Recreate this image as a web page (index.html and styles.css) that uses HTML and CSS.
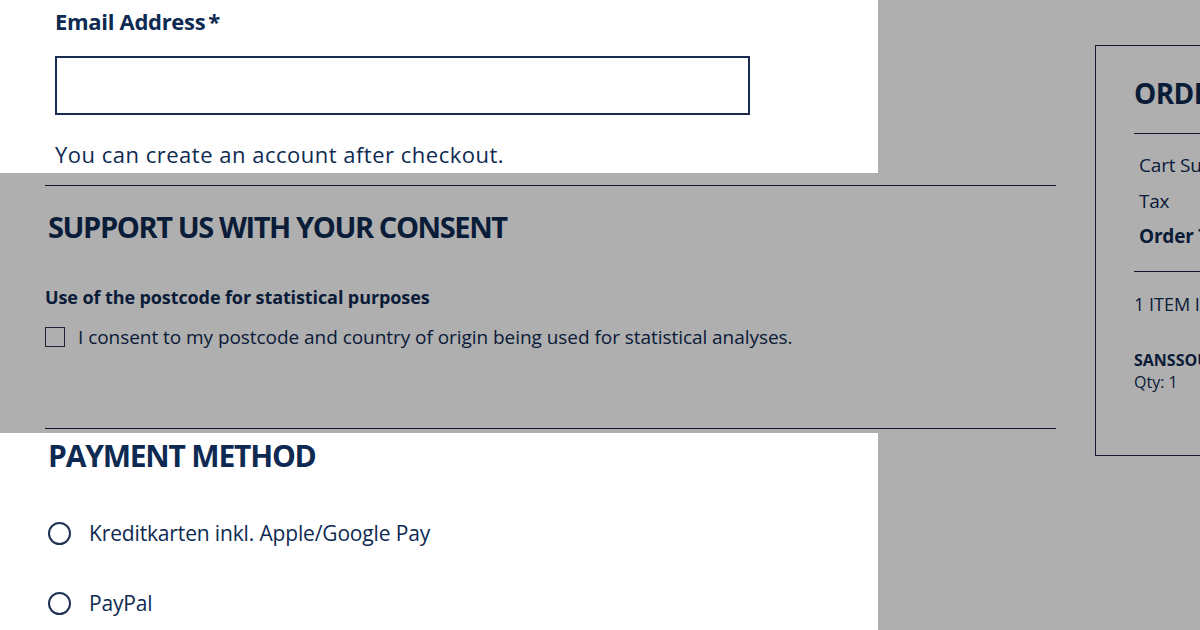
FILE: index.html
```html
<!DOCTYPE html>
<html lang="en">
<head>
<meta charset="utf-8">
<title>Checkout</title>
<link rel="stylesheet" href="styles.css">
</head>
<body>
<div class="page">
  <main class="main">
    <section class="email-section">
      <label class="field-label" for="email">Email Address<span class="req">*</span></label>
      <input class="text-input" id="email" type="email">
      <p class="help">You can create an account after checkout.</p>
    </section>

    <section class="consent">
      <h2 class="section-title">SUPPORT US WITH YOUR CONSENT</h2>
      <h3 class="sub-title">Use of the postcode for statistical purposes</h3>
      <label class="check-row"><span class="checkbox"></span>I consent to my postcode and country of origin being used for statistical analyses.</label>
    </section>

    <section class="payment">
      <h2 class="section-title pay-title">PAYMENT METHOD</h2>
      <label class="radio-row"><span class="radio"></span>Kreditkarten inkl. Apple/Google Pay</label>
      <label class="radio-row"><span class="radio"></span>PayPal</label>
    </section>
  </main>

  <aside class="summary">
    <h2 class="summary-title">ORDER SUMMARY</h2>
    <div class="totals">
      <div class="total-row"><span>Cart Subtotal</span><span>€29.90</span></div>
      <div class="total-row"><span>Tax</span><span>€4.77</span></div>
      <div class="total-row strong"><span>Order Total</span><span>€29.90</span></div>
    </div>
    <div class="items">
      <div class="items-count">1 ITEM IN CART</div>
      <div class="item-name">SANSSOUCI</div>
      <div class="item-qty">Qty: 1</div>
    </div>
  </aside>
</div>

<div class="dim dim-right"></div>
<div class="dim dim-band"></div>
</body>
</html>
```

FILE: styles.css
```css
* { box-sizing: border-box; }

html, body {
  margin: 0;
  padding: 0;
  background: #ffffff;
  overflow: hidden;
}

body {
  width: 1200px;
  height: 630px;
  position: relative;
  font-family: "Open Sans", "Noto Sans", sans-serif;
  color: #0e2a52;
}

.page {
  display: flex;
  align-items: flex-start;
}

.main {
  width: 1056px;
  padding-left: 45px;
  flex-shrink: 0;
}

.email-section {
  padding-left: 10px;
  padding-top: 6px;
  padding-bottom: 16px;
  border-bottom: 1px solid #14213f;
}

.field-label {
  display: block;
  font-size: 22px;
  font-weight: 700;
  letter-spacing: -0.3px;
  line-height: 30px;
}

.req { margin-left: 3px; }

.text-input {
  display: block;
  margin-top: 20px;
  width: 695px;
  height: 59px;
  border: 2px solid #1a2b50;
  background: #fff;
  outline: none;
}

.help {
  margin: 24px 0 0 0;
  font-size: 22px;
  line-height: 30px;
  letter-spacing: 0.5px;
}

.consent {
  padding-top: 23px;
  padding-bottom: 78px;
  border-bottom: 1px solid #14213f;
}

.section-title {
  margin: 0 0 0 3px;
  font-size: 29px;
  font-weight: 700;
  letter-spacing: -1.4px;
  line-height: 36px;
}

.sub-title {
  margin: 39px 0 0 0;
  font-size: 18px;
  font-weight: 700;
  letter-spacing: -0.1px;
  line-height: 26px;
}

.check-row {
  display: flex;
  align-items: center;
  margin-top: 14px;
  font-size: 19px;
  line-height: 26px;
  letter-spacing: -0.05px;
}

.checkbox {
  width: 20px;
  height: 20px;
  border: 1.5px solid #2a3550;
  background: #fff;
  margin-right: 13px;
  flex-shrink: 0;
}

.payment {
  padding-top: 7px;
}

.pay-title {
  font-size: 30px;
  letter-spacing: -1.2px;
  line-height: 40px;
}

.radio-row {
  display: flex;
  align-items: center;
  margin-top: 41px;
  font-size: 21px;
  line-height: 32px;
  letter-spacing: -0.15px;
}

.radio-row + .radio-row { margin-top: 38px; }

.radio {
  width: 23px;
  height: 23px;
  border: 2px solid #1f3050;
  border-radius: 50%;
  margin: 0 18px 0 3px;
  flex-shrink: 0;
}

.summary {
  margin-left: 39px;
  margin-top: 45px;
  width: 340px;
  height: 411px;
  flex-shrink: 0;
  border: 1px solid #1c2747;
  padding: 30px 30px 0 38px;
}

.summary-title {
  margin: 0;
  font-size: 28px;
  font-weight: 700;
  letter-spacing: -0.6px;
  line-height: 34px;
  padding-bottom: 23px;
  border-bottom: 1px solid #14213f;
}

.totals {
  padding: 14px 0 16px 5px;
  border-bottom: 1px solid #14213f;
}

.total-row {
  display: flex;
  justify-content: space-between;
  font-size: 19px;
  line-height: 35.5px;
  letter-spacing: -0.2px;
}

.total-row.strong { font-weight: 700; }

.items-count {
  margin-top: 19px;
  font-size: 18px;
  line-height: 26px;
}

.item-name {
  margin-top: 32px;
  font-size: 16px;
  font-weight: 700;
  line-height: 22px;
}

.item-qty {
  font-size: 16px;
  line-height: 22px;
}

.dim {
  position: absolute;
  background: rgba(0, 0, 0, 0.314);
  pointer-events: none;
}

.dim-right {
  left: 878px;
  top: 0;
  right: 0;
  bottom: 0;
}

.dim-band {
  left: 0;
  top: 173px;
  width: 878px;
  height: 260px;
}
```
